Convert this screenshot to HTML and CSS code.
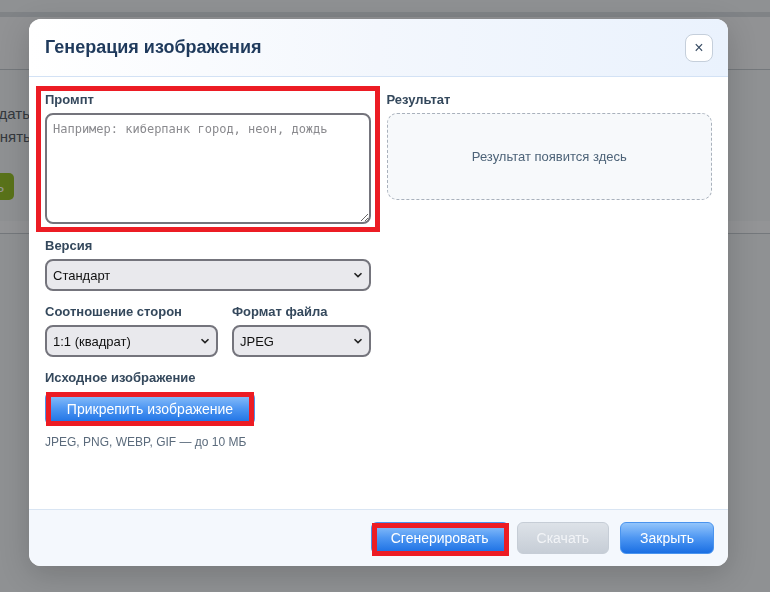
FILE: index.html
```html
<!DOCTYPE html>
<html lang="ru">
<head>
    <meta charset="UTF-8">
    <meta name="viewport" content="width=device-width, initial-scale=1.0">
    <title>Генерация изображения</title>
    <link rel="stylesheet" href="styles.css">
</head>
<body>
    <div class="page">
        <div class="topbar"></div>
        <div class="subbar"></div>
        <div class="hero">
            <p class="hero-text">Здесь вы можете создать картинку по описанию</p>
            <p class="hero-text">или загрузить и поменять, подправить</p>
            <button class="hero-btn">Начать</button>
        </div>
        <div class="strip"></div>
    </div>

    <div class="backdrop">
        <div class="modal">
            <div class="modal-header">
                <h2>Генерация изображения</h2>
                <button class="close-btn" aria-label="Закрыть">&times;</button>
            </div>

            <div class="modal-body">
                <div class="col">
                    <div class="field field-prompt marked mark-prompt">
                        <label for="prompt">Промпт</label>
                        <textarea id="prompt" placeholder="Например: киберпанк город, неон, дождь"></textarea>
                    </div>

                    <div class="field">
                        <label for="version">Версия</label>
                        <div class="select-wrap">
                            <select id="version">
                                <option>Стандарт</option>
                            </select>
                            <svg class="chevron" width="10" height="6" viewBox="0 0 10 6"><path d="M1.5 1.2 5 4.6 8.5 1.2" fill="none" stroke="#222" stroke-width="1.6"/></svg>
                        </div>
                    </div>

                    <div class="field-row">
                        <div class="field">
                            <label for="ratio">Соотношение сторон</label>
                            <div class="select-wrap">
                                <select id="ratio">
                                    <option>1:1 (квадрат)</option>
                                </select>
                                <svg class="chevron" width="10" height="6" viewBox="0 0 10 6"><path d="M1.5 1.2 5 4.6 8.5 1.2" fill="none" stroke="#222" stroke-width="1.6"/></svg>
                            </div>
                        </div>
                        <div class="field">
                            <label for="format">Формат файла</label>
                            <div class="select-wrap">
                                <select id="format">
                                    <option>JPEG</option>
                                </select>
                                <svg class="chevron" width="10" height="6" viewBox="0 0 10 6"><path d="M1.5 1.2 5 4.6 8.5 1.2" fill="none" stroke="#222" stroke-width="1.6"/></svg>
                            </div>
                        </div>
                    </div>

                    <div class="field">
                        <label>Исходное изображение</label>
                        <div class="attach">
                            <button class="btn btn-blue attach-btn marked mark-attach">Прикрепить изображение</button>
                        </div>
                        <p class="hint">JPEG, PNG, WEBP, GIF — до 10 МБ</p>
                    </div>
                </div>

                <div class="col">
                    <div class="field">
                        <label>Результат</label>
                        <div class="result-box">Результат появится здесь</div>
                    </div>
                </div>
            </div>

            <div class="modal-footer">
                <button class="btn btn-blue marked mark-generate">Сгенерировать</button>
                <button class="btn btn-disabled" disabled>Скачать</button>
                <button class="btn btn-blue">Закрыть</button>
            </div>
        </div>
    </div>
</body>
</html>
```

FILE: styles.css
```css
html, body {
    margin: 0;
    padding: 0;
    height: 100%;
}
body {
    font-family: "Liberation Sans", Arial, sans-serif;
    font-size: 13px;
    background-color: #f4f6f8;
    color: #333;
    overflow: hidden;
}

/* page behind the dialog */
.topbar {
    height: 12px;
    background-color: #f4f6f8;
    border-bottom: 5px solid #d9dde1;
}
.subbar {
    height: 52px;
    border-bottom: 1px solid #c4c9ce;
    background-color: #f7f8fa;
}
.hero {
    height: 151px;
    padding-top: 32px;
    box-sizing: border-box;
    margin-left: -148px;
}
.hero-text {
    margin: 0;
    font-size: 15px;
    line-height: 23px;
    color: #50565e;
}
.hero-btn {
    margin-top: 25px;
    margin-left: 96px;
    height: 27px;
    padding: 0 10px;
    border: none;
    border-radius: 5px;
    background-color: #93bf1c;
    color: #fff;
    font-family: inherit;
    font-size: 14px;
}
.strip {
    height: 12px;
    background-color: #fbfcfd;
    border-bottom: 1px solid #c4c9ce;
}

/* dialog */
.backdrop {
    position: fixed;
    inset: 0;
    background-color: rgba(20, 22, 24, 0.45);
    display: flex;
    align-items: flex-start;
    padding: 19px 0 0 29px;
}
.modal {
    width: 699px;
    height: 547px;
    background-color: #fff;
    border-radius: 12px;
    box-shadow: 0 8px 30px rgba(0, 0, 0, 0.18);
    display: flex;
    flex-direction: column;
    overflow: hidden;
}
.modal-header {
    height: 57px;
    flex-shrink: 0;
    display: flex;
    align-items: center;
    justify-content: space-between;
    padding: 0 15px 0 16px;
    background: linear-gradient(90deg, #ffffff 0%, #f3f7fd 50%, #eaf2fd 100%);
    border-bottom: 1px solid #d3e2f5;
}
.modal-header h2 {
    margin: 0;
    font-size: 18px;
    font-weight: bold;
    color: #1f3a5c;
}
.close-btn {
    width: 28px;
    height: 28px;
    padding: 0;
    border: 1px solid #c5cfdb;
    border-radius: 8px;
    background-color: #fff;
    color: #3b4f66;
    font-family: inherit;
    font-size: 16px;
    line-height: 24px;
}

.modal-body {
    flex: 1;
    display: grid;
    grid-template-columns: 1fr 1fr;
    gap: 16px;
    padding: 15px 16px 0;
}
.field {
    display: flex;
    flex-direction: column;
    margin-bottom: 13px;
}
.field-prompt {
    margin-bottom: 14px;
}
.field label {
    font-size: 13px;
    line-height: 15px;
    font-weight: bold;
    color: #34485c;
    margin-bottom: 6px;
}
textarea {
    height: 111px;
    box-sizing: border-box;
    border: 2px solid #74747c;
    border-radius: 8px;
    padding: 7px 6px;
    font-family: "DejaVu Sans Mono", monospace;
    font-size: 12px;
    resize: vertical;
}
textarea::placeholder {
    color: #8a8a8e;
}
.field-row {
    display: grid;
    grid-template-columns: 173px 1fr;
    gap: 14px;
}
.select-wrap {
    position: relative;
}
select {
    appearance: none;
    width: 100%;
    height: 32px;
    box-sizing: border-box;
    border: 2px solid #74747c;
    border-radius: 8px;
    background-color: #e9e9ed;
    padding: 0 24px 0 6px;
    font-family: inherit;
    font-size: 13px;
    color: #111;
}
.chevron {
    position: absolute;
    right: 8px;
    top: 13px;
    pointer-events: none;
}

.btn {
    height: 32px;
    padding: 0 19px;
    border-radius: 6px;
    font-family: inherit;
    font-size: 14px;
    color: #fff;
    cursor: pointer;
}
.btn-blue {
    border: 1px solid #4a94ee;
    background: linear-gradient(180deg, #93c5fb 0%, #4d96f2 50%, #1a6fe3 100%);
}
.btn-disabled {
    border: 1px solid #c6cdd6;
    background: linear-gradient(180deg, #dde2e8 0%, #c6cdd6 100%);
    color: #f2f4f7;
    cursor: default;
}
.attach {
    display: flex;
}
.attach-btn {
    width: 210px;
    height: 33px;
    margin-top: 1px;
}
.hint {
    margin: 10px 0 0;
    font-size: 12px;
    color: #5b6b7c;
}

.result-box {
    height: 87px;
    box-sizing: border-box;
    border: 1px dashed #a9b1bc;
    border-radius: 10px;
    background-color: #f7f9fb;
    display: flex;
    align-items: center;
    justify-content: center;
    color: #4d6378;
    font-size: 13px;
}

.modal-footer {
    flex-shrink: 0;
    height: 57px;
    box-sizing: border-box;
    border-top: 1px solid #d9e5f3;
    background-color: #f4f8fd;
    display: flex;
    align-items: center;
    justify-content: flex-end;
    gap: 11px;
    padding: 0 14px;
}

/* red review frames drawn over marked items */
.marked {
    position: relative;
}
.marked::after {
    content: "";
    position: absolute;
    border: 5px solid #ec1c24;
    pointer-events: none;
}
.mark-prompt::after {
    inset: -6px -9px -8px -9px;
}
.mark-attach::after {
    inset: -1px 0 -2px 0;
}
.mark-generate {
    margin-right: -3px;
}
.mark-generate::after {
    inset: 0 -1px -3px 0;
}
```
